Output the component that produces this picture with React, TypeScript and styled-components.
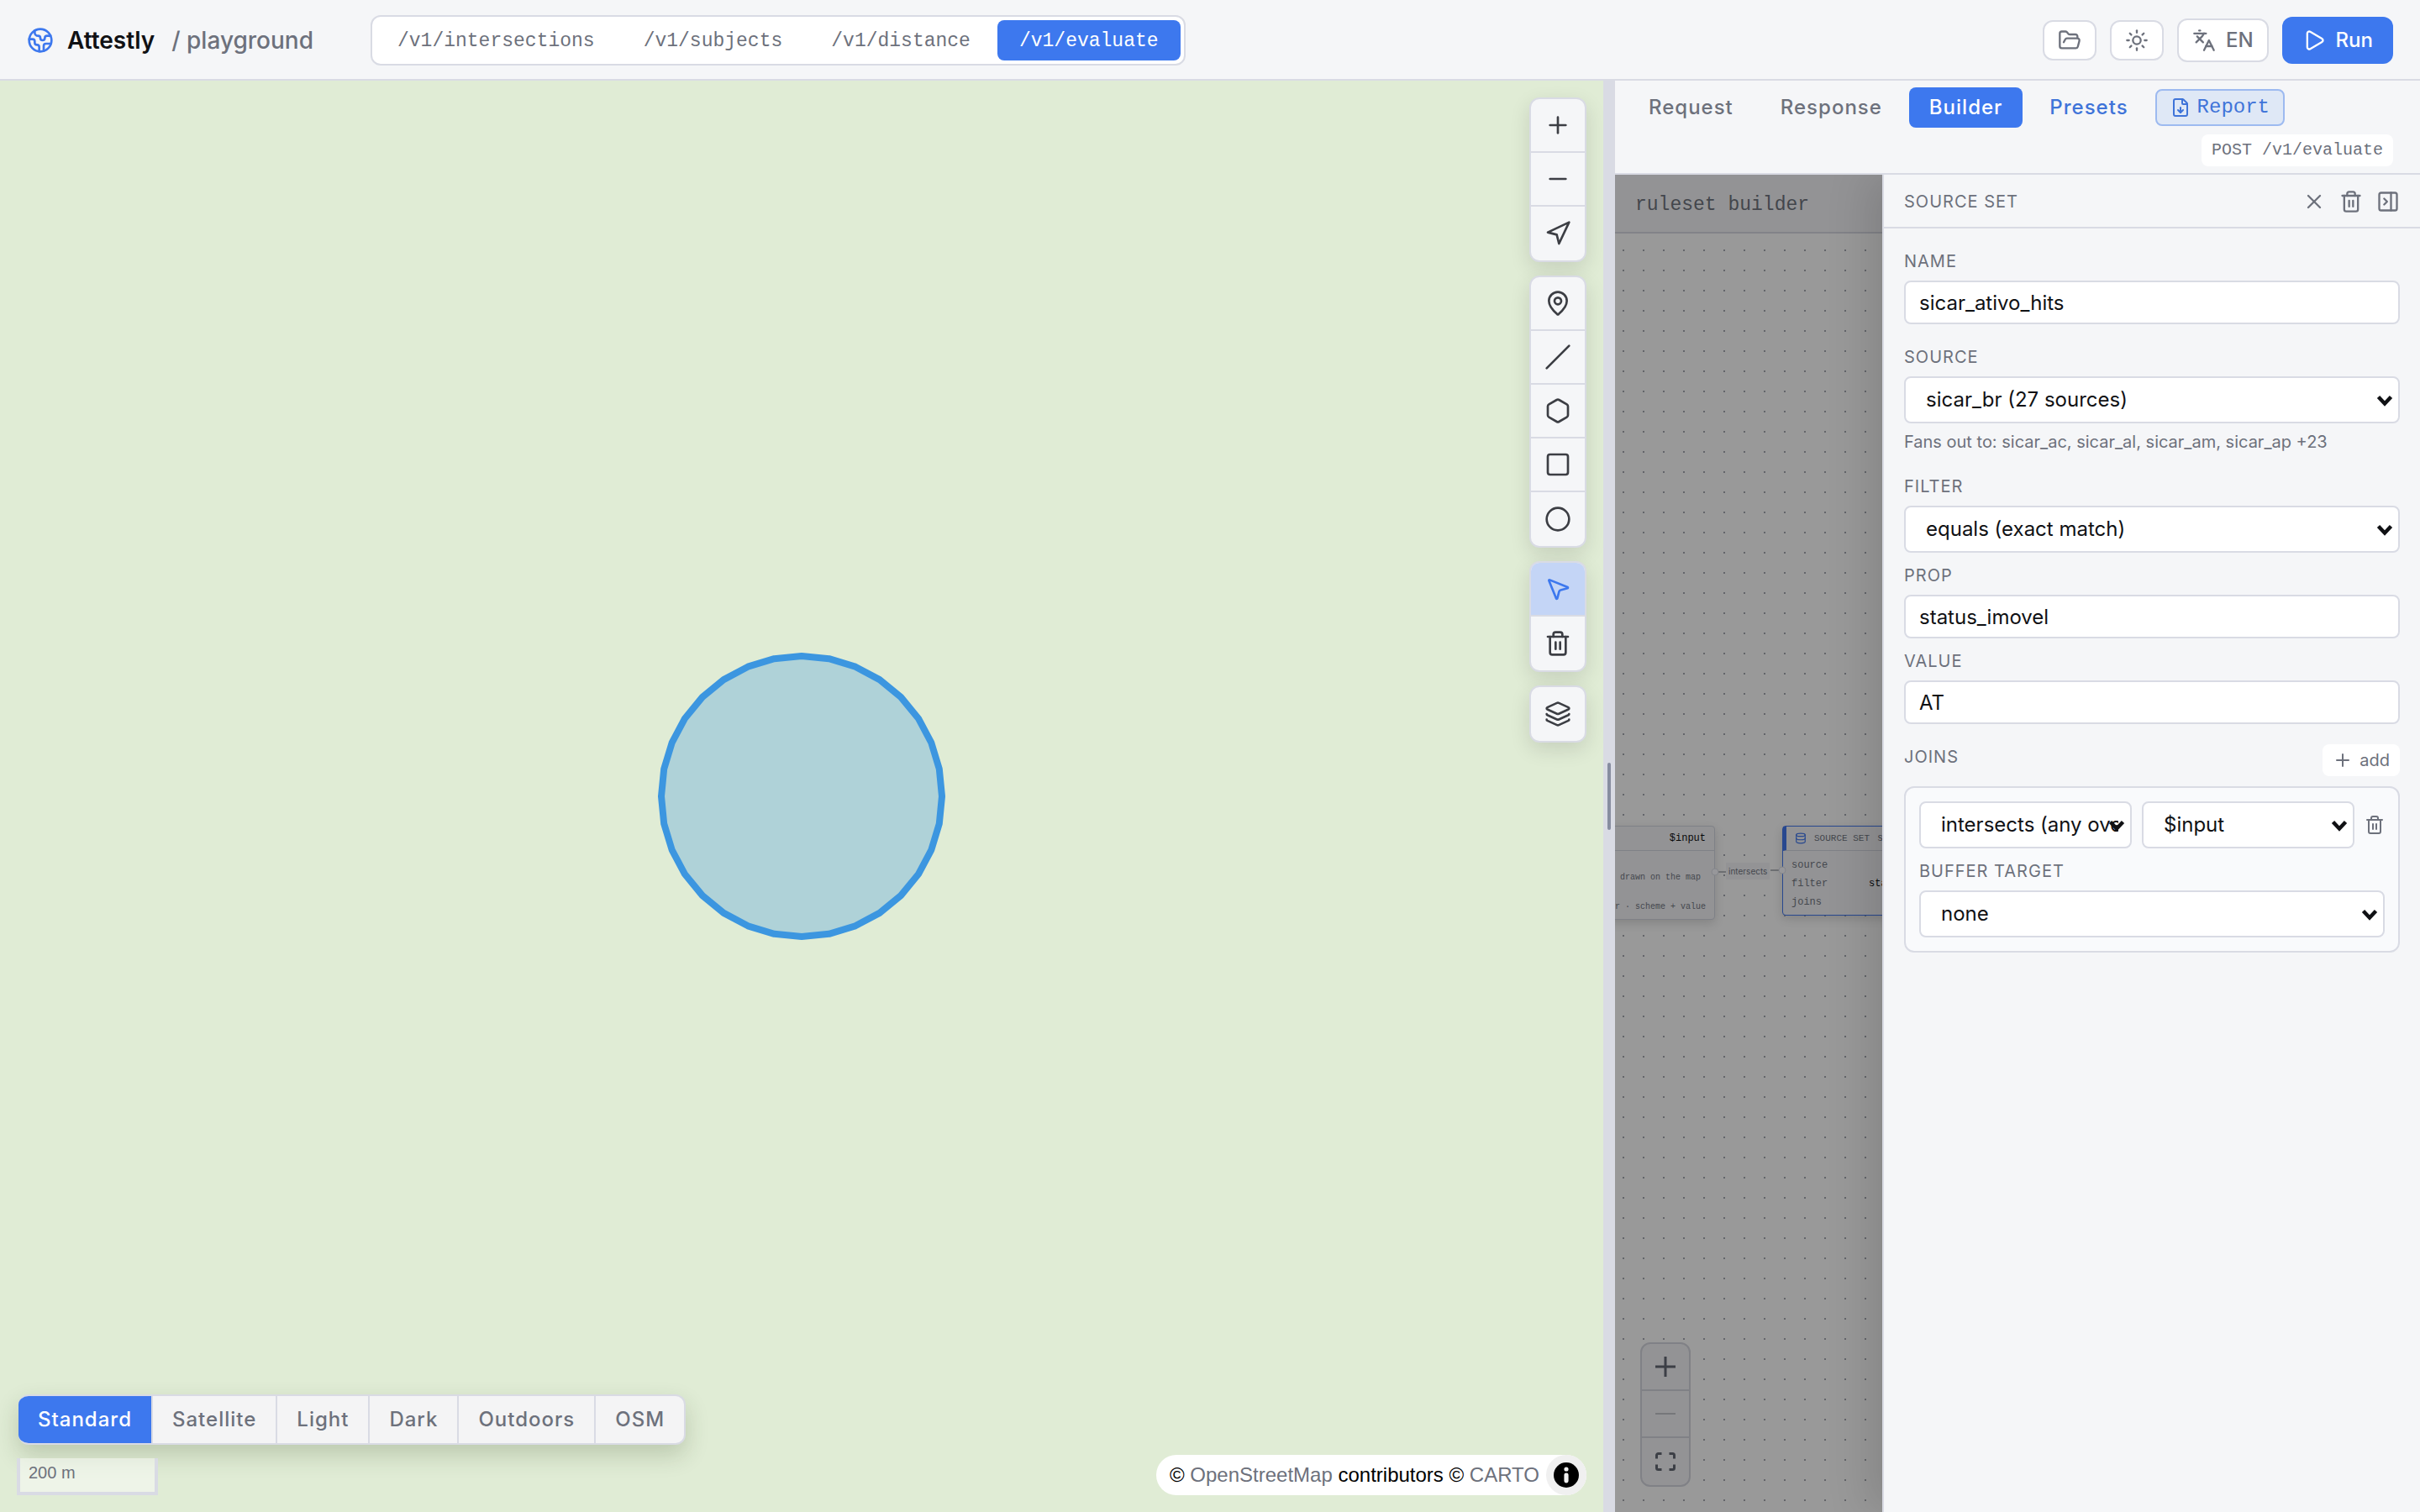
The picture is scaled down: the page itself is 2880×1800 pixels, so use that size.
import React, { useState } from "react";
import styled, { createGlobalStyle, css } from "styled-components";
import {
  Circle,
  Database,
  Earth,
  FileDown,
  FolderOpen,
  Hexagon,
  Languages,
  Layers,
  MapPin,
  Minus,
  MousePointer2,
  Navigation,
  PanelRightClose,
  Play,
  Plus,
  Slash,
  Square,
  Sun,
  Trash2,
  X,
} from "lucide-react";

const sans = `Inter, "Liberation Sans", sans-serif`;
const mono = `"Liberation Mono", monospace`;
const attributionFont = `"Liberation Sans", Arial, sans-serif`;

const c = {
  surface: "#f5f6f8",
  white: "#ffffff",
  line: "#d9dbe4",
  text: "#101114",
  muted: "#6d717c",
  icon: "#3c3e44",
  accent: "#3d78ee",
  accentText: "#3f74d9",
  map: "#e0ecd5",
};

const GlobalStyle = createGlobalStyle`
  *, *::before, *::after { box-sizing: border-box; }
  body { margin: 0; font-family: ${sans}; color: ${c.text}; background: ${c.surface}; }
  button, input, select { font: inherit; color: inherit; margin: 0; }
  button { cursor: pointer; padding: 0; border: 0; background: none; }
  a { text-decoration: none; }
  svg { display: block; flex: none; }
`;

/* ---------- Shell ---------- */

const Page = styled.div`
  display: grid;
  grid-template-rows: auto minmax(0, 1fr);
  height: 100vh;
  font-size: 24px;
  line-height: 32px;
`;

const Header = styled.header`
  display: flex;
  align-items: center;
  padding: 18px 32px 16px;
  background: ${c.surface};
  border-bottom: 2px solid ${c.line};
`;

const Brand = styled.a`
  display: flex;
  align-items: center;
  gap: 16px;
  color: ${c.text};
  font-size: 28px;
  font-weight: 500;
  margin-right: 68px;

  svg {
    color: ${c.accent};
  }
`;

const BrandName = styled.span`
  font-weight: 600;
`;

const BrandSuffix = styled.span`
  padding-left: 4px;
  color: ${c.muted};
`;

const Endpoints = styled.nav`
  display: flex;
  gap: 6px;
  padding: 4px;
  background: ${c.white};
  border: 2px solid ${c.line};
  border-radius: 12px;
`;

const Endpoint = styled.button<{ $active?: boolean }>`
  height: 48px;
  padding: 2px 26px 0;
  border-radius: 8px;
  font-family: ${mono};
  font-size: 23px;
  color: ${(p) => (p.$active ? c.white : c.muted)};
  background: ${(p) => (p.$active ? c.accent : "transparent")};
`;

const HeaderActions = styled.div`
  display: flex;
  align-items: center;
  gap: 16px;
  margin-left: auto;
`;

const OutlineButton = styled.button<{ $tall?: boolean }>`
  display: flex;
  align-items: center;
  gap: 12px;
  height: ${(p) => (p.$tall ? 52 : 48)}px;
  padding: 0 16px;
  color: ${c.muted};
  font-weight: 500;
  background: ${c.white};
  border: 2px solid ${c.line};
  border-radius: 12px;
`;

const RunButton = styled.button`
  display: flex;
  align-items: center;
  gap: 12px;
  height: 56px;
  padding: 0 24px;
  color: ${c.white};
  font-weight: 500;
  background: ${c.accent};
  border-radius: 12px;
`;

const Workspace = styled.main`
  display: grid;
  grid-template-columns: minmax(0, 1908fr) 14px minmax(0, 958fr);
  min-height: 0;
`;

const Splitter = styled.div`
  display: flex;
  align-items: center;
  justify-content: center;
  background: ${c.line};

  &::after {
    content: "";
    width: 4px;
    height: 80px;
    border-radius: 2px;
    background: #878da0;
  }
`;

/* ---------- Map ---------- */

const MapPane = styled.section`
  display: flex;
  flex-direction: column;
  justify-content: space-between;
  position: relative;
  padding: 20px;
  background: ${c.map};
  overflow: hidden;
`;

const DrawnShape = styled.svg`
  position: absolute;
  top: 50%;
  left: 50%;
  transform: translate(-50%, -50%);
`;

const ToolStack = styled.div`
  display: flex;
  flex-direction: column;
  align-self: flex-end;
  gap: 16px;
`;

const ToolGroup = styled.div`
  display: flex;
  flex-direction: column;
  width: 68px;
  overflow: hidden;
  background: ${c.surface};
  border: 2px solid ${c.line};
  border-radius: 12px;
  box-shadow: 0 8px 24px rgba(0, 0, 0, 0.12);
`;

const Tool = styled.button<{ $active?: boolean }>`
  display: flex;
  align-items: center;
  justify-content: center;
  height: 64px;
  color: ${(p) => (p.$active ? c.accent : c.icon)};
  background: ${(p) => (p.$active ? "#c4d5f6" : "transparent")};

  &:not(:last-child) {
    border-bottom: 2px solid ${c.line};
  }
`;

const MapFooter = styled.div`
  display: flex;
  align-items: flex-end;
  justify-content: space-between;
`;

const FooterLeft = styled.div`
  display: flex;
  flex-direction: column;
  align-items: flex-start;
  gap: 16px;
`;

const Basemaps = styled.div`
  display: flex;
  margin-left: 2px;
  overflow: hidden;
  background: #f4f4f5;
  border: 2px solid ${c.line};
  border-left: 0;
  border-radius: 12px;
  box-shadow: 0 12px 28px rgba(40, 60, 20, 0.2);
`;

const Basemap = styled.button<{ $active?: boolean }>`
  height: 56px;
  padding: 0 23px;
  font-weight: 500;
  letter-spacing: 1px;
  color: ${(p) => (p.$active ? c.white : c.muted)};
  background: ${(p) => (p.$active ? c.accent : "transparent")};

  & + & {
    border-left: 2px solid ${c.line};
  }
`;

const Scale = styled.div`
  width: 168px;
  height: 44px;
  padding: 0 10px;
  font-family: ${attributionFont};
  font-size: 20px;
  line-height: 34px;
  color: ${c.muted};
  background: rgba(255, 255, 255, 0.45);
  border: 4px solid ${c.line};
  border-top: 0;
`;

const Attribution = styled.div`
  display: flex;
  align-items: center;
  gap: 8px;
  padding-left: 16px;
  font-family: ${attributionFont};
  color: #000;
  background: ${c.white};
  border-radius: 24px;

  a {
    color: ${c.muted};
  }
`;

const InfoButton = styled.button`
  display: flex;
  align-items: center;
  justify-content: center;
  width: 48px;
  height: 48px;
  border-radius: 50%;
  background: #f0f0f0;
`;

/* ---------- Side panel ---------- */

const SidePanel = styled.section`
  display: grid;
  grid-template-rows: auto minmax(0, 1fr);
  min-width: 0;
`;

const PanelHeader = styled.div`
  display: flex;
  flex-direction: column;
  gap: 8px;
  padding: 8px 32px 8px 16px;
  background: ${c.surface};
  border-bottom: 2px solid ${c.line};
`;

const Tabs = styled.div`
  display: flex;
  align-items: center;
  gap: 8px;
`;

const Tab = styled.button<{ $active?: boolean; $link?: boolean }>`
  height: 48px;
  padding: 0 24px;
  font-weight: 500;
  letter-spacing: 1px;
  border-radius: 8px;
  color: ${(p) => (p.$active ? c.white : p.$link ? c.accentText : c.muted)};
  background: ${(p) => (p.$active ? c.accent : "transparent")};
`;

const ReportButton = styled.button`
  display: flex;
  align-items: center;
  gap: 8px;
  height: 44px;
  padding: 0 16px;
  font-family: ${mono};
  color: ${c.accentText};
  background: #dfe8f6;
  border: 2px solid #9dbaf0;
  border-radius: 8px;
`;

const Route = styled.code`
  align-self: flex-end;
  padding: 0 12px;
  font-family: ${mono};
  font-size: 20px;
  line-height: 38px;
  color: ${c.muted};
  background: ${c.white};
  border-radius: 8px;
`;

const PanelBody = styled.div`
  display: grid;
  grid-template-columns: minmax(0, 1fr) 640px;
  min-height: 0;
`;

/* ---------- Ruleset canvas, dimmed behind the drawer ---------- */

const Builder = styled.div`
  display: flex;
  flex-direction: column;
  min-width: 0;
  background: #999;
`;

const BuilderHeader = styled.div`
  padding: 20px 24px 16px;
  font-family: ${mono};
  font-size: 23px;
  color: #43464c;
  background: #939395;
  border-bottom: 2px solid #828388;
`;

const Canvas = styled.div`
  position: relative;
  flex: 1;
  overflow: hidden;
  background-image: radial-gradient(circle, #63656a 1px, transparent 1px);
  background-size: 24px 24px;
  background-position: -2px 8px;
`;

const nodeText = css`
  font-family: ${mono};
  font-size: 12px;
  line-height: 22px;
  color: #44474d;
`;

const Node = styled.article<{ $selected?: boolean }>`
  position: absolute;
  ${nodeText}
  background: #939395;
  border: 1px solid ${(p) => (p.$selected ? "#28488f" : "#7f8187")};
  border-radius: 4px;
  box-shadow: 0 4px 12px rgba(0, 0, 0, 0.14);
`;

const InputNode = styled(Node)`
  top: 705px;
  left: -121px;
  width: 240px;
  height: 112px;
`;

const SourceNode = styled(Node)`
  top: 705px;
  left: 199px;
  width: 240px;
`;

const NodeHeader = styled.header<{ $accent?: boolean }>`
  display: flex;
  align-items: center;
  gap: 9px;
  height: 29px;
  padding: 0 10px;
  border-bottom: 1px solid #7f8187;
  border-left: ${(p) => (p.$accent ? "4px solid #28488f" : "0")};

  svg {
    color: #28488f;
  }
`;

const NodeKind = styled.span`
  font-size: 11px;
`;

const NodeName = styled.strong`
  margin-left: auto;
  font-weight: 500;
  color: #08090a;
`;

const NodeNotes = styled.div`
  display: flex;
  flex-direction: column;
  align-items: flex-end;
  gap: 13px;
  padding: 21px 10px;
  font-size: 10px;
`;

const NodeNote = styled.span<{ $inset?: boolean }>`
  margin-right: ${(p) => (p.$inset ? 6 : 0)}px;
`;

const NodeRows = styled.dl`
  margin: 0;
  padding: 6px 10px 4px;
`;

const NodeRow = styled.div`
  display: flex;

  dt {
    width: 92px;
  }
  dd {
    margin: 0;
    color: #08090a;
  }
`;

const Edges = styled.svg`
  position: absolute;
  inset: 0;
  width: 100%;
  height: 100%;
`;

const EdgeLabel = styled.span`
  position: absolute;
  top: 749px;
  left: 132px;
  padding: 0 3px;
  font-size: 10px;
  line-height: 20px;
  color: #44474d;
  background: #939395;
`;

const CanvasControls = styled.div`
  position: absolute;
  left: 30px;
  bottom: 30px;
  display: flex;
  flex-direction: column;
  width: 60px;
  background: #939395;
  border: 2px solid #808186;
  border-radius: 12px;
`;

const CanvasControl = styled.button`
  display: flex;
  align-items: center;
  justify-content: center;
  height: 56px;
  color: #3c3f46;

  &:not(:last-child) {
    border-bottom: 2px solid #808186;
  }
  &:disabled {
    color: #76777a;
  }
`;

/* ---------- Drawer ---------- */

const Drawer = styled.aside`
  position: relative;
  background: ${c.surface};
  border-left: 2px solid ${c.line};
  box-shadow: -16px 0 48px rgba(0, 0, 0, 0.13);
  clip-path: inset(0 0 0 -100px);
`;

const DrawerHeader = styled.div`
  display: flex;
  align-items: center;
  gap: 16px;
  padding: 18px 24px 16px;
  border-bottom: 2px solid ${c.line};
`;

const caption = css`
  margin: 0;
  font-size: 20px;
  font-weight: 400;
  line-height: 30px;
  letter-spacing: 1px;
  text-transform: uppercase;
  color: ${c.muted};
`;

const DrawerTitle = styled.h2`
  ${caption}
  line-height: 28px;
  margin-right: auto;
`;

const IconButton = styled.button`
  color: ${c.muted};
`;

const Form = styled.form`
  display: flex;
  flex-direction: column;
  gap: 24px;
  padding: 24px;
`;

const FieldSet = styled.div`
  display: flex;
  flex-direction: column;
  gap: 12px;
`;

const Field = styled.div`
  display: flex;
  flex-direction: column;
  gap: 8px;
`;

const Label = styled.label`
  ${caption}
`;

const Caption = styled.h3`
  ${caption}
`;

const TextInput = styled.input`
  width: 100%;
  height: 52px;
  padding: 0 16px;
  background: ${c.white};
  border: 2px solid ${c.line};
  border-radius: 8px;
`;

const SelectWrap = styled.div`
  position: relative;
  min-width: 0;

  svg {
    position: absolute;
    top: 22px;
    right: 8px;
    pointer-events: none;
  }
`;

const NativeSelect = styled.select`
  appearance: none;
  width: 100%;
  height: 56px;
  padding: 0 14px 0 24px;
  background: ${c.white};
  border: 2px solid ${c.line};
  border-radius: 8px;
`;

const Help = styled.p`
  margin: 0;
  font-size: 20px;
  line-height: 28px;
  color: ${c.muted};
`;

const JoinsHeader = styled.div`
  display: flex;
  align-items: flex-start;
  justify-content: space-between;
`;

const AddButton = styled.button`
  display: flex;
  align-items: center;
  gap: 8px;
  height: 38px;
  padding: 0 12px;
  font-size: 20px;
  color: ${c.muted};
  background: ${c.white};
  border-radius: 8px;
`;

const JoinCard = styled.div`
  display: flex;
  flex-direction: column;
  gap: 12px;
  padding: 16px;
  background: #f9fafc;
  border: 2px solid ${c.line};
  border-radius: 12px;
`;

const JoinRow = styled.div`
  display: grid;
  grid-template-columns: 1fr 1fr auto;
  align-items: center;
  gap: 12px;
`;

type SelectProps = { id?: string; name: string; options: string[] };

function Select({ id, name, options }: SelectProps) {
  return (
    <SelectWrap>
      <NativeSelect id={id} aria-label={id ? undefined : name}>
        {options.map((o) => (
          <option key={o}>{o}</option>
        ))}
      </NativeSelect>
      <svg width="20" height="14" viewBox="0 0 20 14" fill="none" aria-hidden>
        <path d="M2.5 2.5 10 10.5l7.5-8" stroke={c.text} strokeWidth="4.5" />
      </svg>
    </SelectWrap>
  );
}

const endpoints = ["/v1/intersections", "/v1/subjects", "/v1/distance", "/v1/evaluate"];
const basemaps = ["Standard", "Satellite", "Light", "Dark", "Outdoors", "OSM"];

const toolGroups = [
  [
    { label: "Zoom in", Icon: Plus },
    { label: "Zoom out", Icon: Minus },
    { label: "Locate", Icon: Navigation },
  ],
  [
    { label: "Point", Icon: MapPin },
    { label: "Line", Icon: Slash },
    { label: "Polygon", Icon: Hexagon },
    { label: "Rectangle", Icon: Square },
    { label: "Circle", Icon: Circle },
  ],
  [
    { label: "Select", Icon: MousePointer2 },
    { label: "Delete", Icon: Trash2 },
  ],
  [{ label: "Layers", Icon: Layers }],
];

const circlePoints = Array.from({ length: 32 }, (_, i) => {
  const a = (i * Math.PI) / 16;
  return `${(176 + 167 * Math.sin(a)).toFixed(1)},${(176 - 167 * Math.cos(a)).toFixed(1)}`;
}).join(" ");

function MapView() {
  const [basemap, setBasemap] = useState("Standard");
  const [tool, setTool] = useState("Select");
  return (
    <MapPane aria-label="Map">
      <DrawnShape width="352" height="352" viewBox="0 0 352 352" aria-hidden>
        <polygon
          points={circlePoints}
          fill="#afd2d8"
          stroke="#3c96e0"
          strokeWidth="8"
          strokeLinejoin="round"
        />
      </DrawnShape>
      <ToolStack>
        {toolGroups.map((group) => (
          <ToolGroup key={group[0].label}>
            {group.map(({ label, Icon }) => (
              <Tool
                key={label}
                aria-label={label}
                $active={tool === label}
                onClick={() => setTool(label)}
              >
                <Icon size={32} />
              </Tool>
            ))}
          </ToolGroup>
        ))}
      </ToolStack>
      <MapFooter>
        <FooterLeft>
          <Basemaps>
            {basemaps.map((b) => (
              <Basemap key={b} $active={b === basemap} onClick={() => setBasemap(b)}>
                {b}
              </Basemap>
            ))}
          </Basemaps>
          <Scale>200 m</Scale>
        </FooterLeft>
        <Attribution>
          <span>
            © <a href="#osm">OpenStreetMap</a> contributors © <a href="#carto">CARTO</a>
          </span>
          <InfoButton aria-label="Toggle attribution">
            <svg width="30" height="30" viewBox="0 0 30 30" aria-hidden>
              <circle cx="15" cy="15" r="15" fill="#000" />
              <circle cx="15" cy="8" r="2.6" fill="#f0f0f0" />
              <rect x="12.4" y="12.4" width="5.2" height="12" rx="2.4" fill="#f0f0f0" />
            </svg>
          </InfoButton>
        </Attribution>
      </MapFooter>
    </MapPane>
  );
}

function RulesetCanvas() {
  return (
    <Builder>
      <BuilderHeader>ruleset builder</BuilderHeader>
      <Canvas>
        <InputNode>
          <NodeHeader>
            <NodeName>$input</NodeName>
          </NodeHeader>
          <NodeNotes>
            <NodeNote $inset>drawn on the map</NodeNote>
            <NodeNote>r · scheme + value</NodeNote>
          </NodeNotes>
        </InputNode>
        <SourceNode $selected>
          <NodeHeader $accent>
            <Database size={14} />
            <NodeKind>SOURCE SET</NodeKind>
            <span>s</span>
          </NodeHeader>
          <NodeRows>
            <NodeRow>
              <dt>source</dt>
            </NodeRow>
            <NodeRow>
              <dt>filter</dt>
              <dd>sta</dd>
            </NodeRow>
            <NodeRow>
              <dt>joins</dt>
            </NodeRow>
          </NodeRows>
        </SourceNode>
        <Edges aria-hidden>
          <path d="M123 760h10M185 758h10" stroke="#43464c" />
          <circle cx="119" cy="760" r="4" fill="#97979a" stroke="#84868b" />
          <circle cx="199" cy="758" r="4" fill="#97979a" stroke="#84868b" />
        </Edges>
        <EdgeLabel>intersects</EdgeLabel>
        <CanvasControls>
          <CanvasControl aria-label="Zoom in">
            <svg width="24" height="24" aria-hidden>
              <path d="M0 12h24M12 0v24" stroke="currentColor" strokeWidth="3" />
            </svg>
          </CanvasControl>
          <CanvasControl aria-label="Zoom out" disabled>
            <svg width="24" height="24" aria-hidden>
              <path d="M0 12h24" stroke="currentColor" strokeWidth="2" />
            </svg>
          </CanvasControl>
          <CanvasControl aria-label="Fit view">
            <svg width="24" height="22" fill="none" aria-hidden>
              <path
                d="M1.5 7.5v-4a2 2 0 0 1 2-2h4M16.5 1.5h4a2 2 0 0 1 2 2v4M22.5 14.5v4a2 2 0 0 1-2 2h-4M7.5 20.5h-4a2 2 0 0 1-2-2v-4"
                stroke="currentColor"
                strokeWidth="3"
              />
            </svg>
          </CanvasControl>
        </CanvasControls>
      </Canvas>
    </Builder>
  );
}

function SourceSetDrawer() {
  return (
    <Drawer>
      <DrawerHeader>
        <DrawerTitle>Source set</DrawerTitle>
        <IconButton aria-label="Close">
          <X size={28} />
        </IconButton>
        <IconButton aria-label="Delete source set">
          <Trash2 size={28} />
        </IconButton>
        <IconButton aria-label="Collapse panel">
          <PanelRightClose size={28} />
        </IconButton>
      </DrawerHeader>
      <Form onSubmit={(e) => e.preventDefault()}>
        <Field>
          <Label htmlFor="name">Name</Label>
          <TextInput id="name" defaultValue="sicar_ativo_hits" />
        </Field>
        <Field>
          <Label htmlFor="source">Source</Label>
          <Select id="source" name="Source" options={["sicar_br (27 sources)"]} />
          <Help>Fans out to: sicar_ac, sicar_al, sicar_am, sicar_ap +23</Help>
        </Field>
        <FieldSet>
          <Field>
            <Label htmlFor="filter">Filter</Label>
            <Select id="filter" name="Filter" options={["equals (exact match)"]} />
          </Field>
          <Field>
            <Label htmlFor="prop">Prop</Label>
            <TextInput id="prop" defaultValue="status_imovel" />
          </Field>
          <Field>
            <Label htmlFor="value">Value</Label>
            <TextInput id="value" defaultValue="AT" />
          </Field>
        </FieldSet>
        <FieldSet>
          <JoinsHeader>
            <Caption>Joins</Caption>
            <AddButton type="button">
              <Plus size={24} /> add
            </AddButton>
          </JoinsHeader>
          <JoinCard>
            <JoinRow>
              <Select name="Join relation" options={["intersects (any overlap)"]} />
              <Select name="Join target" options={["$input"]} />
              <IconButton type="button" aria-label="Delete join">
                <Trash2 size={24} />
              </IconButton>
            </JoinRow>
            <Field>
              <Label htmlFor="buffer">Buffer target</Label>
              <Select id="buffer" name="Buffer target" options={["none"]} />
            </Field>
          </JoinCard>
        </FieldSet>
      </Form>
    </Drawer>
  );
}

export default function App() {
  const [endpoint, setEndpoint] = useState("/v1/evaluate");
  return (
    <Page>
      <GlobalStyle />
      <Header>
        <Brand href="#home">
          <Earth size={32} />
          <BrandName>Attestly</BrandName>
          <BrandSuffix>/ playground</BrandSuffix>
        </Brand>
        <Endpoints aria-label="Endpoints">
          {endpoints.map((e) => (
            <Endpoint key={e} $active={e === endpoint} onClick={() => setEndpoint(e)}>
              {e}
            </Endpoint>
          ))}
        </Endpoints>
        <HeaderActions>
          <OutlineButton aria-label="Open file">
            <FolderOpen size={28} />
          </OutlineButton>
          <OutlineButton aria-label="Toggle theme">
            <Sun size={28} />
          </OutlineButton>
          <OutlineButton $tall>
            <Languages size={28} /> EN
          </OutlineButton>
          <RunButton>
            <Play size={28} /> Run
          </RunButton>
        </HeaderActions>
      </Header>
      <Workspace>
        <MapView />
        <Splitter role="separator" aria-orientation="vertical" />
        <SidePanel>
          <PanelHeader>
            <Tabs>
              <Tab>Request</Tab>
              <Tab>Response</Tab>
              <Tab $active>Builder</Tab>
              <Tab $link>Presets</Tab>
              <ReportButton>
                <FileDown size={24} /> Report
              </ReportButton>
            </Tabs>
            <Route>POST /v1/evaluate</Route>
          </PanelHeader>
          <PanelBody>
            <RulesetCanvas />
            <SourceSetDrawer />
          </PanelBody>
        </SidePanel>
      </Workspace>
    </Page>
  );
}
